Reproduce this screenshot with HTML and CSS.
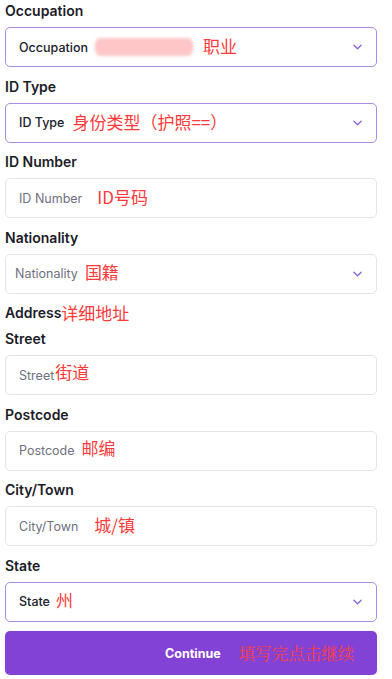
FILE: index.html
```html
<!DOCTYPE html>
<html>
<head>
    <title>Personal Details</title>
    <meta name="viewport" content="width=device-width, initial-scale=1">
    <link rel="stylesheet" href="styles.css">
</head>

<body>
    <div class="container">
        <form id="detailsForm">
            <div class="form-group">
                <label>Occupation</label>
                <div class="field select">
                    <span class="value">Occupation</span>
                    <span class="smudge"></span>
                    <span class="note note-occupation">职业</span>
                    <svg class="chevron" viewBox="0 0 10 6"><path d="M1 1l4 4 4-4"/></svg>
                </div>
            </div>
            <div class="form-group">
                <label>ID Type</label>
                <div class="field select">
                    <span class="value">ID Type</span>
                    <span class="note note-idtype">身份类型（护照==）</span>
                    <svg class="chevron" viewBox="0 0 10 6"><path d="M1 1l4 4 4-4"/></svg>
                </div>
            </div>
            <div class="form-group">
                <label>ID Number</label>
                <div class="field">
                    <span class="placeholder">ID Number</span>
                    <span class="note note-idnumber">ID号码</span>
                </div>
            </div>
            <div class="form-group">
                <label>Nationality</label>
                <div class="field select plain">
                    <span class="placeholder">Nationality</span>
                    <span class="note note-nationality">国籍</span>
                    <svg class="chevron" viewBox="0 0 10 6"><path d="M1 1l4 4 4-4"/></svg>
                </div>
            </div>

            <h3 class="section-title">Address<span class="note">详细地址</span></h3>

            <div class="form-group">
                <label>Street</label>
                <div class="field">
                    <span class="placeholder">Street</span>
                    <span class="note note-street">街道</span>
                </div>
            </div>
            <div class="form-group">
                <label>Postcode</label>
                <div class="field">
                    <span class="placeholder">Postcode</span>
                    <span class="note note-postcode">邮编</span>
                </div>
            </div>
            <div class="form-group">
                <label>City/Town</label>
                <div class="field">
                    <span class="placeholder">City/Town</span>
                    <span class="note note-city">城/镇</span>
                </div>
            </div>
            <div class="form-group">
                <label>State</label>
                <div class="field select">
                    <span class="value">State</span>
                    <span class="note note-state">州</span>
                    <svg class="chevron" viewBox="0 0 10 6"><path d="M1 1l4 4 4-4"/></svg>
                </div>
            </div>

            <button type="button">
                <span class="btn-label">Continue</span>
                <span class="note note-continue">填写完点击继续</span>
            </button>
        </form>
    </div>
</body>
</html>
```

FILE: styles.css
```css
html, body {
    background-color: #ffffff;
    font-family: Inter, "Noto Sans", sans-serif;
    margin: 0;
    padding: 0;
}

.container {
    width: 372px;
    padding: 1px 0 0 5px;
    box-sizing: content-box;
}

.form-group {
    display: flex;
    flex-direction: column;
    margin-bottom: 9.5px;
}

.form-group label,
.section-title {
    font-size: 14px;
    font-weight: 600;
    line-height: 20px;
    color: #1c1c28;
    margin: 0 0 6px 0;
}

.section-title {
    display: flex;
    align-items: center;
    margin: 0 0 6px 0;
}

.field {
    height: 40px;
    border: 1px solid #e3e3ea;
    border-radius: 5px;
    box-sizing: border-box;
    display: flex;
    align-items: center;
    padding: 0 13px;
}

.field.select {
    border-color: #a98ce4;
}

.field.plain {
    border-color: #e3e3ea;
    padding-left: 9px;
}

.value {
    font-size: 12.5px;
    font-weight: 500;
    color: #20202c;
}

.placeholder {
    font-size: 12.5px;
    font-weight: 400;
    color: #707080;
}

.chevron {
    width: 9px;
    height: 6px;
    margin-left: auto;
    margin-right: 1px;
    fill: none;
    stroke: #8a62d8;
    stroke-width: 1.4;
    stroke-linecap: round;
    stroke-linejoin: round;
}

.note {
    font-family: "Noto Sans CJK SC", sans-serif;
    font-size: 17px;
    font-weight: 400;
    color: #ff3a3a;
    line-height: 20px;
}

.smudge {
    width: 98px;
    height: 18px;
    margin-left: 7px;
    background: #ffc6c8;
    border-radius: 6px;
    filter: blur(1.5px);
}

.note-occupation { margin-left: 10px; margin-bottom: 2px; }
.note-idtype { margin-left: 8px; margin-bottom: 2px; }
.note-idnumber { margin-left: 15px; margin-bottom: 2px; }
.note-nationality { margin-left: 7px; margin-bottom: 4px; }
.note-street { margin-left: 1px; margin-bottom: 6px; }
.note-postcode { margin-left: 7px; margin-bottom: 6px; }
.note-city { margin-left: 16px; margin-bottom: 2px; }
.note-state { margin-left: 6px; margin-bottom: 3px; }

button {
    width: 100%;
    height: 44px;
    margin-top: 0;
    background-color: #8242d6;
    color: white;
    border: none;
    border-radius: 5px;
    box-shadow: 0px 2px 6px rgba(0, 0, 0, 0.08);
    display: flex;
    align-items: center;
    justify-content: flex-start;
    padding: 0 0 0 160px;
    cursor: pointer;
    font-family: Inter, sans-serif;
}

.btn-label {
    font-size: 12.5px;
    font-weight: 700;
}

.note-continue {
    font-family: "Noto Serif CJK SC", "Noto Sans CJK SC", serif;
    font-size: 16.5px;
    margin-left: 18px;
    color: #ff4040;
}
```
